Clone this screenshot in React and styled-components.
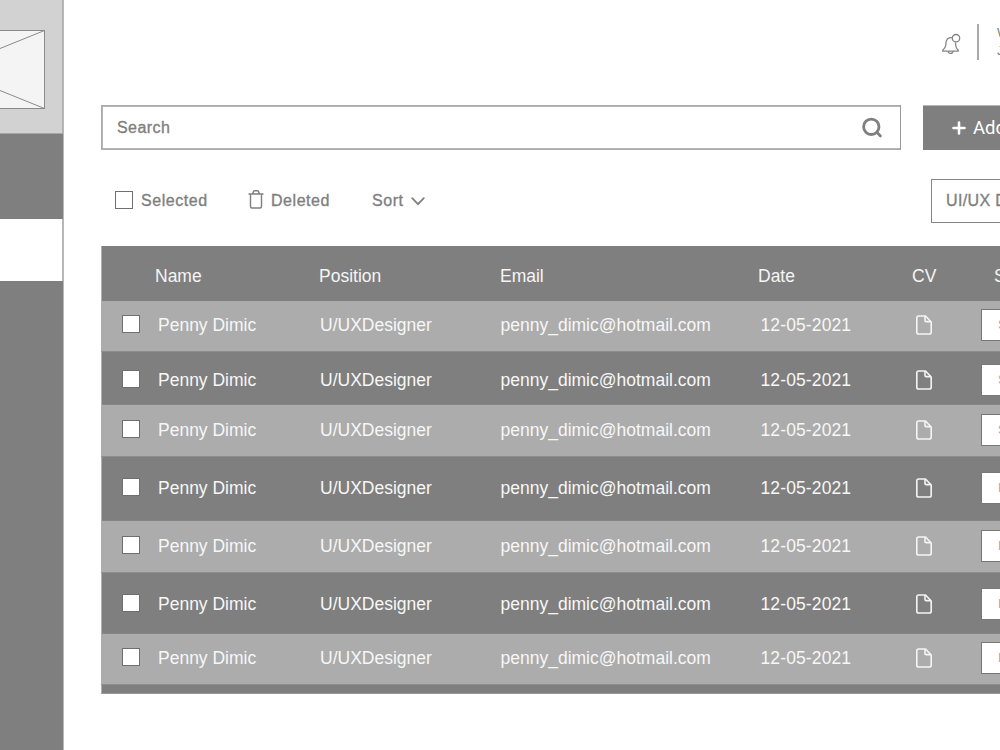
import React from 'react'
import styled, { createGlobalStyle } from 'styled-components'

const GlobalStyle = createGlobalStyle`
  html,
  body {
    margin: 0;
    overflow: hidden;
    background: #fff;
  }
  * {
    box-sizing: border-box;
  }
`

const Page = styled.div`
  display: flex;
  width: 1000px;
  height: 750px;
  overflow: hidden;
  background: #fff;
  color: #7f7f7f;
  font-family: 'Liberation Sans', Arial, sans-serif;
`

const Sidebar = styled.aside`
  display: flex;
  flex-direction: column;
  flex: 0 0 64px;
  background: #7f7f7f;
  border-right: 1px solid #b8b8b8;
`

const LogoArea = styled.div`
  height: 134px;
  padding-top: 30px;
  background: #d2d2d2;
  border-right: 1px solid #b0b0b0;
  border-bottom: 1px solid #a6a6a6;
  svg {
    display: block;
  }
`

const NavItem = styled.div`
  height: ${({ $height }) => $height}px;
  background: ${({ $active }) => ($active ? '#fff' : '#7f7f7f')};
  border-right: ${({ $active }) => ($active ? '1px solid #b4b4b4' : 'none')};
`

const Main = styled.main`
  flex: 1;
  min-width: 0;
  overflow: hidden;
  padding-left: 37px;
`

const TopBar = styled.header`
  display: flex;
  height: 105px;
  padding: 24px 0 0 840px;
`

const BellIcon = styled.svg`
  flex: none;
  margin-top: 9px;
`

const User = styled.div`
  flex: none;
  height: 36px;
  margin-left: 16px;
  padding: 0 0 0 18px;
  border-left: 2px solid #aaa;
  font-size: 13px;
  line-height: 18px;
  white-space: nowrap;
`

const SearchRow = styled.div`
  display: flex;
  gap: 22px;
`

const SearchBox = styled.div`
  display: flex;
  flex: 0 0 800px;
  align-items: center;
  justify-content: space-between;
  height: 45px;
  padding: 0 17px 0 15px;
  border: 1px solid #acacac;
  border-right-color: #999;
  box-shadow: inset 1px 1px #b4b4b4, inset 0 -1px #b4b4b4;
`

const Label = styled.span`
  font-size: 16px;
  letter-spacing: ${({ $spacing = 0.55 }) => $spacing}px;
  line-height: 20px;
  white-space: nowrap;
  -webkit-text-stroke: 0.35px #7f7f7f;
`

const AddButton = styled.div`
  display: flex;
  flex: 0 0 170px;
  align-items: center;
  height: 45px;
  padding: 0 0 1px 29px;
  gap: 7px;
  background: #7f7f7f;
  border-top: 1px solid #b4b4b4;
  color: #fff;
  font-family: Roboto, sans-serif;
  font-size: 18.5px;
  white-space: nowrap;
`

const Toolbar = styled.div`
  display: flex;
  align-items: center;
  height: 44px;
  margin: 29px 0 23px;
  padding-left: 14px;
`

const Action = styled.div`
  display: flex;
  flex: none;
  align-items: center;
  gap: ${({ $gap }) => $gap}px;
  width: ${({ $width }) => $width}px;
`

const Checkbox = styled.span`
  width: 18px;
  height: 18px;
  margin-bottom: 2px;
  background: #fff;
  border: 1px solid #6f6f6f;
`

const TrashIcon = styled.svg`
  margin-bottom: 3px;
`

const Filter = styled.div`
  display: flex;
  flex: 0 0 170px;
  align-items: center;
  height: 44px;
  padding-left: 14px;
  border: 1px solid #858585;
`

const Table = styled.div`
  width: 1100px;
  height: 448px;
  background: #7f7f7f;
  border-left: 1px solid #b0b0b0;
  border-bottom: 1px solid #999;
`

const HeadRow = styled.div`
  display: grid;
  grid-template-columns: 164px 181px 258px 154px 82px 100px;
  height: 55px;
  padding: 20px 0 0 53px;
  color: #f5f5f5;
  font-size: 17.5px;
  line-height: 20px;
`

const Row = styled.div`
  display: grid;
  grid-template-columns: 36px 162px 180.5px 260px 155px 65.5px 120px;
  align-items: center;
  align-content: start;
  height: ${({ $height }) => $height}px;
  margin-left: ${({ $light }) => ($light ? -1 : 0)}px;
  padding: ${({ $top }) => $top}px 0 0 ${({ $light }) => ($light ? 21 : 20)}px;
  background: ${({ $light }) => ($light ? '#acacac' : '#7f7f7f')};
  border-bottom: 1px solid ${({ $light }) => ($light ? '#8e8e8e' : '#858585')};
  color: #f7f7f7;
  font-size: 17.5px;
  line-height: 20px;
  white-space: nowrap;
`

const DateCell = styled.span`
  letter-spacing: 0.12px;
`

const Status = styled.div`
  display: flex;
  align-items: center;
  height: 32px;
  padding-left: 16px;
  background: #fff;
  border: 1px solid #777;
  color: #a8a8a8;
  font-size: 13px;
`

const rows = [
  { height: 51, top: 8, light: true, status: 'Selected' },
  { height: 53, top: 12, light: false, status: 'Selected' },
  { height: 52, top: 9, light: true, status: 'Selected' },
  { height: 64, top: 15, light: false, status: 'Pending' },
  { height: 52, top: 9, light: true, status: 'Pending' },
  { height: 61, top: 15, light: false, status: 'Pending' },
  { height: 51, top: 8, light: true, status: 'Pending' },
]

function Logo() {
  return (
    <svg width="45" height="79" fill="none" stroke="#8a8a8a">
      <rect x="-60" y="0.5" width="104.5" height="78" fill="#f4f4f4" />
      <path d="M0 18.5 44.5.5M0 60.5l44.5 18" />
    </svg>
  )
}

function Bell() {
  return (
    <BellIcon width="20" height="22" viewBox="0 0 20 22" fill="none" stroke="#858585" strokeWidth="1.3">
      <path d="M11.200 4.600C7.500 4.100 5 6.500 5 9.800c0 4-.8 5.500-3.200 7.300v1h15.400v-1c-1.900-1.400-2.700-3.500-2.700-7.600" />
      <path d="M7.200 18.300c.3 2.800 4.300 2.800 4.700 0" />
      <circle cx="15" cy="5.200" r="3.700" />
    </BellIcon>
  )
}

function SearchIcon() {
  return (
    <svg width="21" height="21" viewBox="0 0 21 21" fill="none" stroke="#7f7f7f" strokeWidth="2.8" strokeLinecap="round">
      <circle cx="9.300" cy="9.800" r="7.700" />
      <path d="m15.100 15.600 3.300 3.300" />
    </svg>
  )
}

function Trash() {
  return (
    <TrashIcon width="16" height="19" viewBox="0 0 16 19" fill="none" stroke="#7f7f7f" strokeWidth="1.400" strokeLinecap="round" strokeLinejoin="round">
      <path d="M1 4h14M4.500 4l1-2.500c.2-.5.5-.8 1-.8h3c.5 0 .8.3 1 .8l1 2.500M2.500 4v12.500c0 1 .6 1.500 1.500 1.500h8c.9 0 1.500-.5 1.500-1.500V4" />
    </TrashIcon>
  )
}

function Chevron() {
  return (
    <svg width="14" height="9" viewBox="0 0 14 9" fill="none" stroke="#7f7f7f" strokeWidth="1.700" strokeLinecap="round">
      <path d="m1.200 1.200 5.800 6 5.800-6" />
    </svg>
  )
}

function FileIcon() {
  return (
    <svg width="16" height="20" viewBox="0 0 16 20" fill="none" stroke="#f5f5f5" strokeWidth="1.600" strokeLinejoin="round">
      <path d="M9.500 1H2.800C1.600 1 .8 1.700.8 2.800v14.400c0 1.200.8 1.800 2 1.800h10.400c1.200 0 2-.6 2-1.800V7z" />
      <path d="M9 1.200v4.300c0 .7.400 1.100 1.100 1.100H15" />
    </svg>
  )
}

export default function App() {
  return (
    <Page>
      <GlobalStyle />
      <Sidebar>
        <LogoArea>
          <Logo />
        </LogoArea>
        <NavItem $height={85} />
        <NavItem $height={62} $active />
      </Sidebar>

      <Main>
        <TopBar>
          <Bell />
          <User>
            <div>Welcome</div>
            <div>John</div>
          </User>
        </TopBar>

        <SearchRow>
          <SearchBox>
            <Label $spacing={0.45}>Search</Label>
            <SearchIcon />
          </SearchBox>
          <AddButton>
            <svg width="14" height="14" stroke="#fff" strokeWidth="2.600" strokeLinecap="round">
              <path d="M7 1.500v11M1.500 7h11" />
            </svg>
            Add New
          </AddButton>
        </SearchRow>

        <Toolbar>
          <Action $gap={8} $width={133}>
            <Checkbox />
            <Label>Selected</Label>
          </Action>
          <Action $gap={7} $width={124}>
            <Trash />
            <Label>Deleted</Label>
          </Action>
          <Action $gap={7} $width={559}>
            <Label>Sort</Label>
            <Chevron />
          </Action>
          <Filter>
            <Label $spacing={0.35}>UI/UX Designer</Label>
          </Filter>
        </Toolbar>

        <Table>
          <HeadRow>
            <span>Name</span>
            <span>Position</span>
            <span>Email</span>
            <span>Date</span>
            <span>CV</span>
            <span>Status</span>
          </HeadRow>
          {rows.map(({ height, top, light, status }, i) => (
            <Row key={i} $height={height} $top={top} $light={light}>
              <Checkbox />
              <span>Penny Dimic</span>
              <span>U/UXDesigner</span>
              <span>penny_dimic@hotmail.com</span>
              <DateCell>12-05-2021</DateCell>
              <FileIcon />
              <Status>{status}</Status>
            </Row>
          ))}
        </Table>
      </Main>
    </Page>
  )
}
